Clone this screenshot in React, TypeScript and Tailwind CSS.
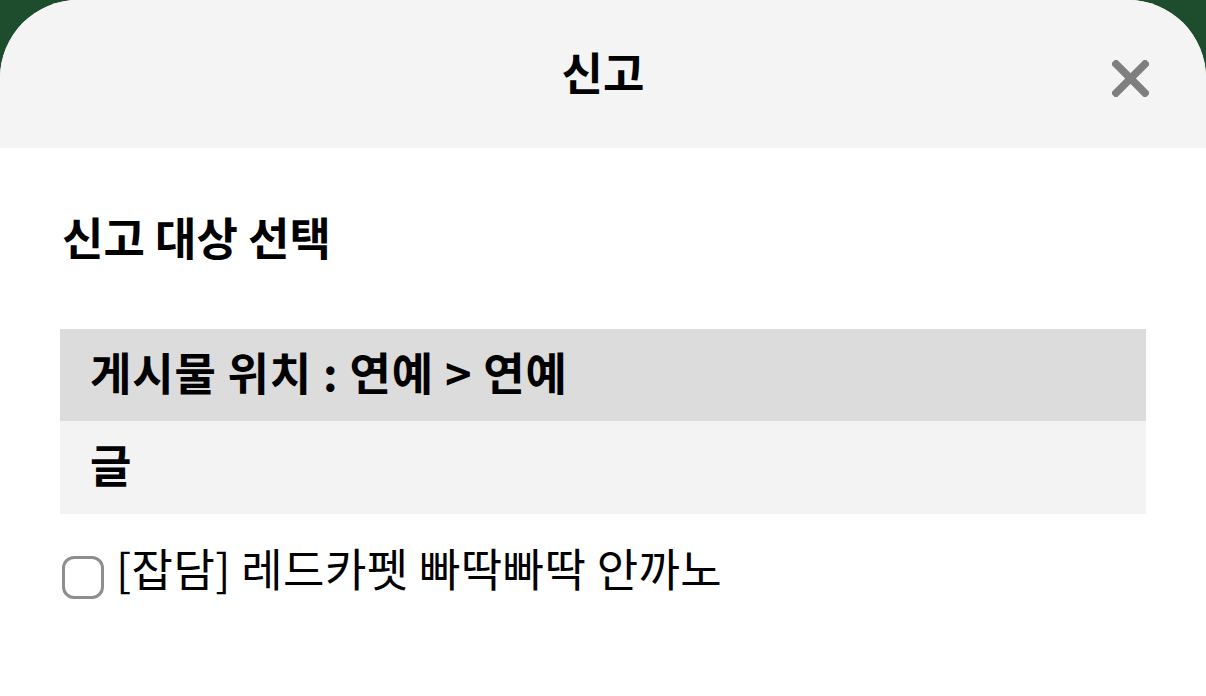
import React from "react";

export default function App() {
  const font = { fontFamily: '"Noto Sans CJK KR", "Noto Sans", sans-serif' };
  return (
    <div className="w-[1206px] h-[696px] bg-[#1e4d2d] overflow-hidden" style={font}>
      <div className="h-full bg-white rounded-t-[78px] overflow-hidden flex flex-col">
        <div className="h-[148px] bg-[#f4f4f4] relative flex items-center justify-center shrink-0 pb-[6px]">
          <span className="text-[45px] font-bold text-black leading-none">신고</span>
          <svg
            className="absolute left-[1112px] top-[60px]"
            width="37"
            height="37"
            viewBox="0 0 37 37"
          >
            <path d="M4 4 L33 33 M33 4 L4 33" stroke="#7f7f7f" strokeWidth="7.5" strokeLinecap="square" />
          </svg>
        </div>
        <div className="px-[60px] flex flex-col">
          <div className="h-[60px] mt-[62px] flex items-center pl-[2px] pb-[8px] text-[45px] font-bold text-black leading-none">
            신고 대상 선택
          </div>
          <div className="mt-[59px] flex flex-col">
            <div className="h-[92px] bg-[#dcdcdc] flex items-center px-[30px] pb-[8px] text-[45px] font-bold text-black leading-none tracking-[0.8px]">
              게시물 위치 : 연예 &gt; 연예
            </div>
            <div className="h-[93px] bg-[#f3f3f3] flex items-center px-[30px] pb-[8px] text-[45px] font-bold text-black leading-none">
              글
            </div>
          </div>
          <div className="mt-[33px] h-[60px] flex items-center gap-[12px] pl-[2px]">
            <div className="w-[42px] h-[43px] rounded-[12px] border-[3px] border-[#8e8e8e] bg-white shrink-0" />
            <span className="text-[45px] text-black leading-none mb-[20px] tracking-[0.4px]">[잡담] 레드카펫 빠딱빠딱 안까노</span>
          </div>
        </div>
      </div>
    </div>
  );
}
